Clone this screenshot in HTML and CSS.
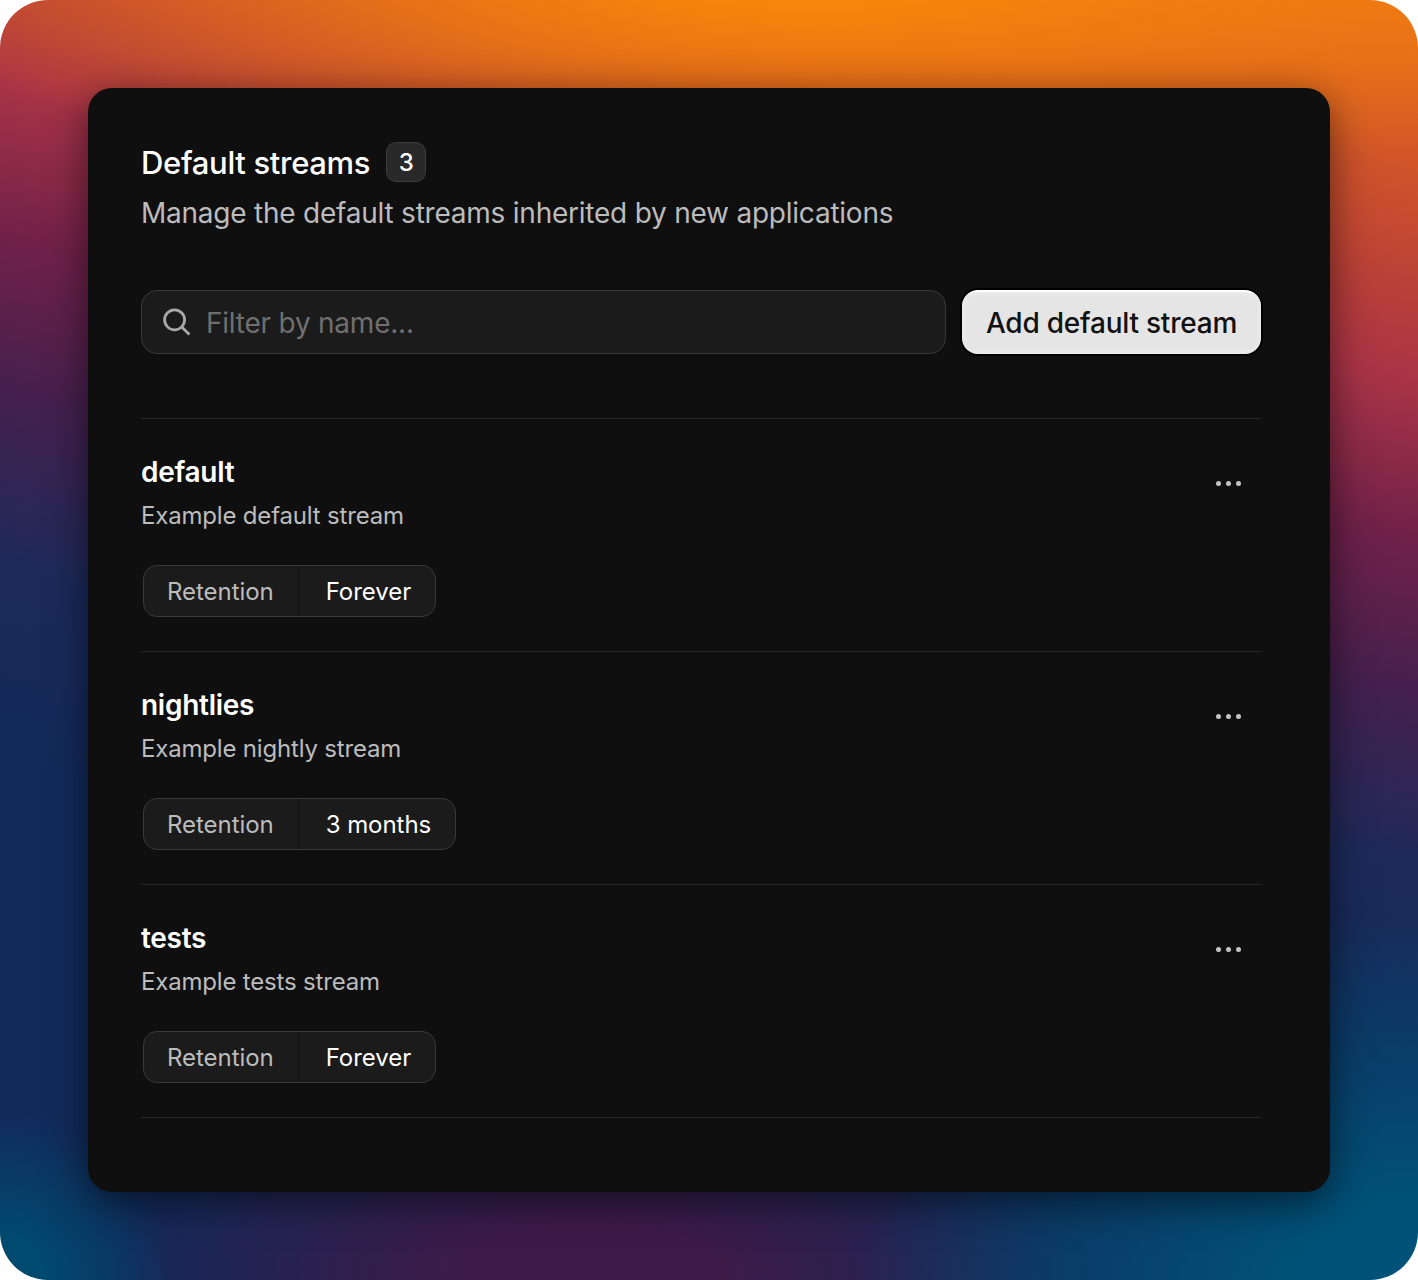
FILE: index.html
```html
<!DOCTYPE html>
<html lang="en">
<head>
    <meta charset="UTF-8">
    <title>Default streams</title>
    <link rel="stylesheet" href="styles.css">
</head>
<body>
    <div class="backdrop">
        <div class="panel">
            <div class="title-row">
                <h1>Default streams</h1>
                <span class="count">3</span>
            </div>
            <p class="subtitle">Manage the default streams inherited by new applications</p>

            <div class="toolbar">
                <div class="search">
                    <svg class="search-icon" width="28" height="28" viewBox="0 0 28 28" fill="none">
                        <circle cx="11.6" cy="11.8" r="10" stroke="currentColor" stroke-width="2.8"/>
                        <path d="M19 19.2L26.4 26.6" stroke="currentColor" stroke-width="2.8"/>
                    </svg>
                    <span class="placeholder">Filter by name...</span>
                </div>
                <button class="add-btn">Add default stream</button>
            </div>

            <div class="stream">
                <div class="stream-head">
                    <div>
                        <h2>default</h2>
                        <p class="stream-desc">Example default stream</p>
                    </div>
                    <div class="more"><i></i><i></i><i></i></div>
                </div>
                <div class="tag">
                    <span class="tag-label">Retention</span>
                    <span class="tag-value">Forever</span>
                </div>
            </div>

            <div class="stream">
                <div class="stream-head">
                    <div>
                        <h2>nightlies</h2>
                        <p class="stream-desc">Example nightly stream</p>
                    </div>
                    <div class="more"><i></i><i></i><i></i></div>
                </div>
                <div class="tag">
                    <span class="tag-label">Retention</span>
                    <span class="tag-value">3 months</span>
                </div>
            </div>

            <div class="stream">
                <div class="stream-head">
                    <div>
                        <h2>tests</h2>
                        <p class="stream-desc">Example tests stream</p>
                    </div>
                    <div class="more"><i></i><i></i><i></i></div>
                </div>
                <div class="tag">
                    <span class="tag-label">Retention</span>
                    <span class="tag-value">Forever</span>
                </div>
            </div>
        </div>
    </div>
</body>
</html>
```

FILE: styles.css
```css
:root {
    --panel: #0f0f0f;
    --line: #272727;
    --field: #1b1b1b;
    --field-line: #393939;
    --muted: #bcbcbc;
}

* {
    box-sizing: border-box;
}

body {
    margin: 0;
    background-color: #fff;
    font-family: Inter, 'Liberation Sans', sans-serif;
    color: #fff;
}

.backdrop {
    width: 1418px;
    height: 1280px;
    padding: 88px;
    border-radius: 48px;
    overflow: hidden;
    background-image:
        radial-gradient(ellipse 170px 170px at 0 1280px, #004a70 25%, rgba(0, 74, 112, 0) 100%),
        radial-gradient(ellipse 560px 370px at 1418px 1280px, #005278 20%, rgba(0, 80, 120, 0) 100%),
        radial-gradient(ellipse 480px 190px at 590px 1270px, #3e1a48 25%, rgba(62, 26, 72, 0) 100%),
        radial-gradient(ellipse 950px 230px at 810px -30px, #f98808 10%, rgba(245, 130, 12, 0) 100%),
        linear-gradient(192deg, #e8701a 0%, #d25628 10%, #b83e3a 19%, #aa3446 24%, #702149 34%, #44204e 44%, #1c2a5a 55%, #122a5a 67%, #122a5a 100%);
}

.panel {
    height: 1104px;
    padding: 53px 69px 0 53px;
    background-color: var(--panel);
    border-radius: 24px;
    box-shadow: 0 10px 40px rgba(0, 0, 0, 0.55);
}

.title-row {
    display: flex;
    align-items: center;
    gap: 16px;
    height: 42px;
}

h1 {
    margin: 0;
    font-size: 31px;
    font-weight: 500;
    letter-spacing: -0.33px;
}

.count {
    display: flex;
    align-items: center;
    justify-content: center;
    width: 40px;
    height: 40px;
    background-color: #292929;
    border: 1px solid #3d3d3d;
    border-radius: 10px;
    font-size: 24px;
    font-weight: 500;
}

.subtitle {
    margin: 13px 0 0;
    font-size: 28px;
    line-height: 34px;
    letter-spacing: -0.23px;
    color: var(--muted);
}

.toolbar {
    display: flex;
    gap: 16px;
    margin-top: 60px;
    padding-bottom: 64px;
    border-bottom: 1px solid var(--line);
}

.search {
    flex: 1;
    display: flex;
    align-items: center;
    gap: 15px;
    height: 64px;
    padding-left: 21px;
    background-color: var(--field);
    border: 1px solid var(--field-line);
    border-radius: 16px;
}

.search-icon {
    color: #a8a8a8;
}

.placeholder {
    padding-top: 2px;
    font-size: 28px;
    letter-spacing: -0.23px;
    color: #6f6f6f;
}

.add-btn {
    width: 299px;
    height: 64px;
    padding: 0;
    background-color: #e5e5e5;
    border: none;
    border-top: 2px solid #fff;
    border-radius: 16px;
    box-shadow: 0 0 0 2px #000, inset 0 0 6px rgba(255, 255, 255, 0.5);
    font-family: inherit;
    font-size: 28px;
    font-weight: 500;
    letter-spacing: -0.23px;
    color: #111;
}

.stream {
    height: 233px;
    padding-top: 32px;
    border-bottom: 1px solid var(--line);
}

.stream-head {
    display: flex;
    justify-content: space-between;
    align-items: flex-start;
}

h2 {
    margin: 0;
    font-size: 28px;
    line-height: 42px;
    font-weight: 600;
    letter-spacing: -0.28px;
}

.stream-desc {
    margin: 8px 0 0;
    font-size: 24px;
    line-height: 30px;
    letter-spacing: -0.18px;
    color: var(--muted);
}

.more {
    display: flex;
    gap: 5px;
    margin: 30px 20px 0 0;
}

.more i {
    width: 5px;
    height: 5px;
    border-radius: 50%;
    background-color: #c4c4c4;
}

.tag {
    display: inline-flex;
    height: 52px;
    margin: 34px 0 0 2px;
    background-color: var(--field);
    border: 1px solid var(--field-line);
    border-radius: 14px;
    font-size: 24px;
    line-height: 52px;
    letter-spacing: -0.05px;
}

.tag-label {
    padding: 0 24px 0 23px;
    border-right: 1px solid #111;
    color: var(--muted);
}

.tag-value {
    padding: 0 24px 0 27px;
}
```
